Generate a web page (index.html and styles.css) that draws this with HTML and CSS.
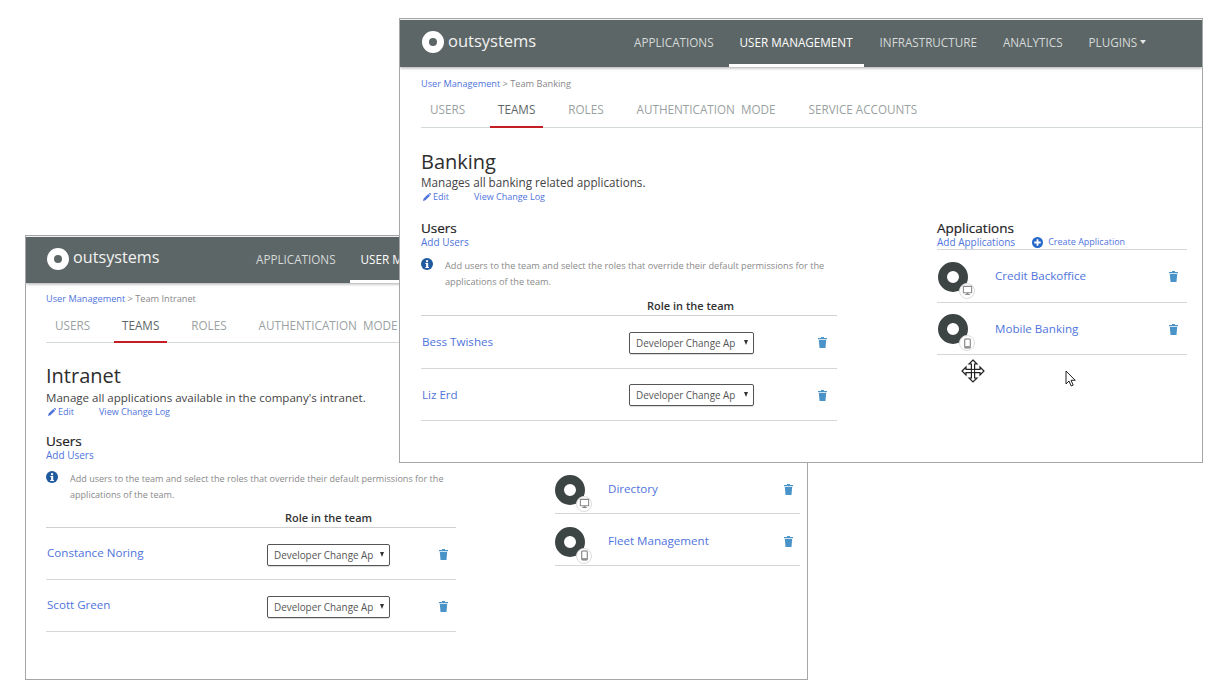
FILE: index.html
```html
<!DOCTYPE html>
<html lang="en">
<head>
<meta charset="utf-8">
<title>OutSystems Teams</title>
<link rel="stylesheet" href="styles.css">
</head>
<body>
<svg class="defs" aria-hidden="true">
  <symbol id="trash" viewBox="0 0 10 12"><path d="M3.6 0h2.8l.4 1H10v1.3H0V1h3.2zM.9 3.2h8.2L8.3 12H1.7z"/></symbol>
  <symbol id="pencil" viewBox="0 0 10 10"><path d="M0 10l.8-3L6.6 1.2l2.2 2.2L3 9.2zM7.3.5L8 0c.4-.2.8-.2 1.2.2l.6.6c.3.4.3.8 0 1.2l-.4.7z"/></symbol>
  <symbol id="info" viewBox="0 0 12 12"><circle cx="6" cy="6" r="6" fill="#1f5a9e"/><rect x="5" y="2.2" width="2.1" height="2" fill="#fff"/><path d="M4.3 5h2.9v4h.8v1H4.3V9h.8V6h-.8z" fill="#fff"/></symbol>
  <symbol id="plus" viewBox="0 0 12 12"><circle cx="6" cy="6" r="6" fill="#2467c8"/><path d="M5 2.5h2V5h2.5v2H7v2.5H5V7H2.5V5H5z" fill="#fff"/></symbol>
  <symbol id="desktop" viewBox="0 0 12 12"><path d="M1.5 1.5h9v7h-9z" fill="#fff" stroke="#8a8a8a" stroke-width="1.2"/><path d="M5 8.500h2v1.400h1.500v1h-5v-1H5z" fill="#8a8a8a"/></symbol>
  <symbol id="phone" viewBox="0 0 12 12"><rect x="3" y="1" width="6" height="10" rx="1" fill="#fff" stroke="#777" stroke-width="1.1"/><path d="M3.5 9h5v1.5h-5z" fill="#777"/></symbol>
</svg>

<section class="window window-back">
  <header class="topbar">
    <div class="logo"><span class="logo-mark"></span><span class="logo-text">outsystems</span></div>
    <nav class="mainnav">
      <a class="mainnav-item">APPLICATIONS</a>
      <a class="mainnav-item is-active">USER MANAGEMENT</a>
    </nav>
  </header>
  <div class="content">
    <div class="crumbs"><a class="link">User Management</a> &gt; Team Intranet</div>
    <nav class="tabs">
      <a class="tab">USERS</a><a class="tab is-active">TEAMS</a><a class="tab">ROLES</a><a class="tab">AUTHENTICATION&nbsp; MODE</a>
    </nav>
    <h1 class="title">Intranet</h1>
    <p class="desc">Manage all applications available in the company's intranet.</p>
    <div class="actions">
      <a class="link action-edit"><svg class="icon-pencil"><use href="#pencil"/></svg>Edit</a>
      <a class="link">View Change Log</a>
    </div>
    <div class="columns">
      <div class="users">
        <h2 class="heading">Users</h2>
        <a class="link add">Add Users</a>
        <div class="note"><svg class="icon-info"><use href="#info"/></svg><p>Add users to the team and select the roles that override their default permissions for the applications of the team.</p></div>
        <div class="role-head">Role in the team</div>
        <div class="row">
          <a class="link name">Constance Noring</a>
          <div class="select">Developer Change Ap<span class="caret"></span></div>
          <svg class="trash"><use href="#trash"/></svg>
        </div>
        <div class="row">
          <a class="link name">Scott Green</a>
          <div class="select">Developer Change Ap<span class="caret"></span></div>
          <svg class="trash"><use href="#trash"/></svg>
        </div>
      </div>
      <div class="apps">
        <div class="apps-head"></div>
        <div class="app">
          <span class="app-icon"><span class="badge"><svg><use href="#desktop"/></svg></span></span>
          <a class="link app-name">Directory</a>
          <svg class="trash"><use href="#trash"/></svg>
        </div>
        <div class="app">
          <span class="app-icon"><span class="badge"><svg><use href="#phone"/></svg></span></span>
          <a class="link app-name">Fleet Management</a>
          <svg class="trash"><use href="#trash"/></svg>
        </div>
      </div>
    </div>
  </div>
</section>

<section class="window window-front">
  <header class="topbar">
    <div class="logo"><span class="logo-mark"></span><span class="logo-text">outsystems</span></div>
    <nav class="mainnav">
      <a class="mainnav-item">APPLICATIONS</a>
      <a class="mainnav-item is-active">USER MANAGEMENT</a>
      <a class="mainnav-item">INFRASTRUCTURE</a>
      <a class="mainnav-item">ANALYTICS</a>
      <a class="mainnav-item">PLUGINS<span class="nav-caret"></span></a>
    </nav>
  </header>
  <div class="content">
    <div class="crumbs"><a class="link">User Management</a> &gt; Team Banking</div>
    <nav class="tabs">
      <a class="tab">USERS</a><a class="tab is-active">TEAMS</a><a class="tab">ROLES</a><a class="tab">AUTHENTICATION&nbsp; MODE</a><a class="tab">SERVICE ACCOUNTS</a>
    </nav>
    <h1 class="title">Banking</h1>
    <p class="desc">Manages all banking related applications.</p>
    <div class="actions">
      <a class="link action-edit"><svg class="icon-pencil"><use href="#pencil"/></svg>Edit</a>
      <a class="link">View Change Log</a>
    </div>
    <div class="columns">
      <div class="users">
        <h2 class="heading">Users</h2>
        <a class="link add">Add Users</a>
        <div class="note"><svg class="icon-info"><use href="#info"/></svg><p>Add users to the team and select the roles that override their default permissions for the applications of the team.</p></div>
        <div class="role-head">Role in the team</div>
        <div class="row">
          <a class="link name">Bess Twishes</a>
          <div class="select">Developer Change Ap<span class="caret"></span></div>
          <svg class="trash"><use href="#trash"/></svg>
        </div>
        <div class="row">
          <a class="link name">Liz Erd</a>
          <div class="select">Developer Change Ap<span class="caret"></span></div>
          <svg class="trash"><use href="#trash"/></svg>
        </div>
      </div>
      <div class="apps">
        <div class="apps-head">
          <h2 class="heading">Applications</h2>
          <div class="apps-links">
            <a class="link add">Add Applications</a>
            <a class="link create"><svg class="icon-plus"><use href="#plus"/></svg>Create Application</a>
          </div>
        </div>
        <div class="app">
          <span class="app-icon"><span class="badge"><svg><use href="#desktop"/></svg></span></span>
          <a class="link app-name">Credit Backoffice</a>
          <svg class="trash"><use href="#trash"/></svg>
        </div>
        <div class="app">
          <span class="app-icon"><span class="badge"><svg><use href="#phone"/></svg></span></span>
          <a class="link app-name">Mobile Banking</a>
          <svg class="trash"><use href="#trash"/></svg>
        </div>
      </div>
    </div>
  </div>
</section>

<svg class="cursor-move" viewBox="0 0 24 24"><path d="M12 1l4 4h-2.400v5.400H19V8l4 4-4 4v-2.400h-5.400V19H16l-4 4-4-4h2.400v-5.400H5V16l-4-4 4-4v2.400h5.400V5H8z" fill="#fff" stroke="#222" stroke-width="1.2"/><path d="M10.400 10.400h3.200v3.200h-3.200z" fill="none" stroke="#222" stroke-width="1"/></svg>
<svg class="cursor-arrow" viewBox="0 0 12 18"><path d="M1 1v13l3-3 2.200 5 2-.9L6 10.300h4.200z" fill="#fff" stroke="#222" stroke-width="1"/></svg>
</body>
</html>
```

FILE: styles.css
```css
* { box-sizing: border-box; }
html, body { margin: 0; padding: 0; }
body {
  position: relative;
  width: 1220px;
  height: 685px;
  overflow: hidden;
  background: #fff;
  font-family: "Open Sans", "Noto Sans", sans-serif;
  color: #333;
}
.defs { display: none; }

.window {
  position: absolute;
  display: flex;
  flex-direction: column;
  overflow: hidden;
  background: #fff;
  border: 1px solid #a6a6a6;
}
.window-front {
  left: 399px;
  top: 18px;
  width: 804px;
  height: 445px;
  --bar-h: 47px;
  --bar-pad: 22px;
  --logo-w: 199px;
  --logo-fs: 16.500px;
  --active-left: 2px;
  --users-w: 416px;
  --gutter: 100px;
  --apps-w: 250px;
  --content-left: 21px;
  --crumb-top: 10px;
  --tab-gap: 17px;
  --tab-pad: 0px;
  --title-top: 20px;
  --title-bottom: -1px;
  --desc-fs: 11.700px;
  --note-fs: 9.200px;
  --columns-top: 17px;
  --note-h: 39px;
  --role-pad: 226px;
  --name-w: 207px;
  --name-nudge: 0px;
  --select-w: 125px;
  --row-h: 52.500px;
  --row-trash: 10px;
  --app-h: 52.500px;
  --app-head: 30px;
  --app-pad: 0px;
  --app-left: 1px;
  --app-trash: 9.500px;
  --app-gap: 27px;
}
.window-back {
  left: 25px;
  top: 235px;
  width: 783px;
  height: 445px;
  --bar-h: 46px;
  --bar-pad: 21px;
  --logo-w: 196px;
  --logo-fs: 16.200px;
  --active-left: 1px;
  --users-w: 410px;
  --gutter: 99px;
  --apps-w: 245px;
  --content-left: 20px;
  --crumb-top: 9px;
  --tab-gap: 16px;
  --tab-pad: 2px;
  --title-top: 19px;
  --title-bottom: 0px;
  --desc-fs: 11.550px;
  --note-fs: 9.050px;
  --columns-top: 15px;
  --note-h: 38px;
  --role-pad: 239px;
  --name-w: 220px;
  --name-nudge: -1px;
  --select-w: 123px;
  --row-h: 52px;
  --row-trash: 8.500px;
  --app-h: 52px;
  --app-head: 29px;
  --app-pad: 2px;
  --app-left: 0px;
  --app-trash: 7.500px;
  --app-gap: 23px;
}

.topbar {
  display: flex;
  flex: none;
  align-items: stretch;
  height: var(--bar-h);
  background: #5d6666;
  box-shadow: 0 1px 3px rgba(0, 0, 0, .35);
  margin-top: 1px;
  padding-left: var(--bar-pad);
}
.logo { display: flex; align-items: center; gap: 4px; width: var(--logo-w); flex: none; padding-bottom: 3px; }
.logo-mark {
  width: 22px;
  height: 22px;
  border-radius: 50%;
  border: 7px solid #fff;
  background: #5d6666;
}
.logo-text { color: #f2f2f2; font-size: var(--logo-fs); line-height: 1; position: relative; top: -1px; }
.mainnav { display: flex; }
.mainnav-item {
  display: flex;
  align-items: center;
  padding: 0 13px;
  font-size: 11.700px;
  color: #d5dada;
  white-space: nowrap;
  border-bottom: 3px solid transparent;
}
.mainnav-item.is-active { color: #fff; border-bottom-color: #fff; padding: 0 11px; margin: 0 3px 0 var(--active-left); }
.nav-caret {
  display: inline-block;
  margin-left: 3px;
  border-left: 3.500px solid transparent;
  border-right: 3.500px solid transparent;
  border-top: 4px solid #e8e8e8;
}

.content { padding-left: var(--content-left); }
.crumbs { margin-top: var(--crumb-top); height: 14px; font-size: 9.200px; line-height: 14px; color: #888; }
.link { color: #4f74dc; }

.tabs { display: flex; height: 37px; border-bottom: 1px solid #d4d9d9; }
.tab {
  display: flex;
  align-items: center;
  padding: var(--tab-pad) 8px 0;
  margin-right: var(--tab-gap);
  font-size: 11.700px;
  color: #9aa1a1;
  white-space: nowrap;
  border-bottom: 2px solid transparent;
  height: 37px;
}
.tab:first-child { padding-left: 9px; }
.tab.is-active { color: #5d6666; border-bottom-color: #c41e24; }

.title { margin: var(--title-top) 0 var(--title-bottom); font-size: 20px; font-weight: 400; line-height: 28px; color: #2e2e2e; }
.desc { margin: 0; font-size: var(--desc-fs); line-height: 15px; color: #444; }
.actions { display: flex; gap: 25px; font-size: 9px; line-height: 13px; }
.action-edit { display: flex; align-items: center; gap: 2px; padding-left: 2px; }
.icon-pencil { width: 8px; height: 8px; fill: #4f74dc; }

.columns {
  display: grid;
  grid-template-columns: var(--users-w) var(--apps-w);
  column-gap: var(--gutter);
  margin-top: var(--columns-top);
}
.heading { margin: 0; font-size: 13.500px; font-weight: 400; line-height: 16px; color: #222; -webkit-text-stroke: .2px #222; }
.add { display: block; font-size: 10px; line-height: 12px; }

.note { display: flex; margin-top: 10px; height: var(--note-h); }
.icon-info { width: 12px; height: 12px; flex: none; margin-right: 12px; }
.note p { margin: 0; font-size: var(--note-fs); line-height: 15.500px; color: #8a8a8a; }

.role-head {
  height: 18px;
  margin-top: 1px;
  padding-left: var(--role-pad);
  font-size: 11px;
  font-weight: 600;
  line-height: 16px;
  color: #333;
  border-bottom: 1px solid #d0d0d0;
}
.row {
  display: flex;
  align-items: center;
  height: var(--row-h);
  padding-left: 1px;
  border-bottom: 1px solid #d6d6d6;
}
.name { width: var(--name-w); font-size: 11.600px; position: relative; top: var(--name-nudge); }
.select {
  position: relative;
  top: 1px;
  width: var(--select-w);
  height: 22px;
  padding-left: 6px;
  font-size: 9.900px;
  line-height: 21px;
  color: #555;
  border: 1px solid #555;
  border-radius: 2px;
  box-shadow: 0 1px 1px rgba(0, 0, 0, .15);
}
.caret {
  position: absolute;
  right: 5px;
  top: 7px;
  border-left: 2.500px solid transparent;
  border-right: 2.500px solid transparent;
  border-top: 5px solid #333;
}
.trash {
  position: relative;
  top: 1px;
  width: 9px;
  height: 11px;
  fill: #4a93c9;
  flex: none;
  margin-left: auto;
  margin-right: var(--row-trash);
}

.apps-head { height: var(--app-head); border-bottom: 1px solid #d6d6d6; }
.apps-links { display: flex; align-items: center; gap: 17px; }
.create { display: flex; align-items: center; gap: 5px; font-size: 9px; line-height: 12px; }
.icon-plus { width: 11px; height: 11px; }
.app {
  display: flex;
  align-items: center;
  height: var(--app-h);
  padding-top: var(--app-pad);
  border-bottom: 1px solid #d6d6d6;
}
.app-icon {
  position: relative;
  top: 1px;
  flex: none;
  width: 30px;
  height: 30px;
  margin-left: var(--app-left);
  margin-right: var(--app-gap);
  border-radius: 50%;
  border: 9px solid #3d4444;
  background: #fff;
}
.badge {
  position: absolute;
  left: 12px;
  top: 12px;
  display: flex;
  align-items: center;
  justify-content: center;
  width: 16px;
  height: 16px;
  border-radius: 50%;
  background: #fff;
  border: 1px solid #ddd;
}
.badge svg { width: 11px; height: 11px; }
.app-name { font-size: 11.600px; }
.apps .trash { margin-right: var(--app-trash); }

.cursor-move { position: absolute; left: 961px; top: 359px; width: 24px; height: 24px; }
.cursor-arrow { position: absolute; left: 1065px; top: 370px; width: 12px; height: 18px; }
```
